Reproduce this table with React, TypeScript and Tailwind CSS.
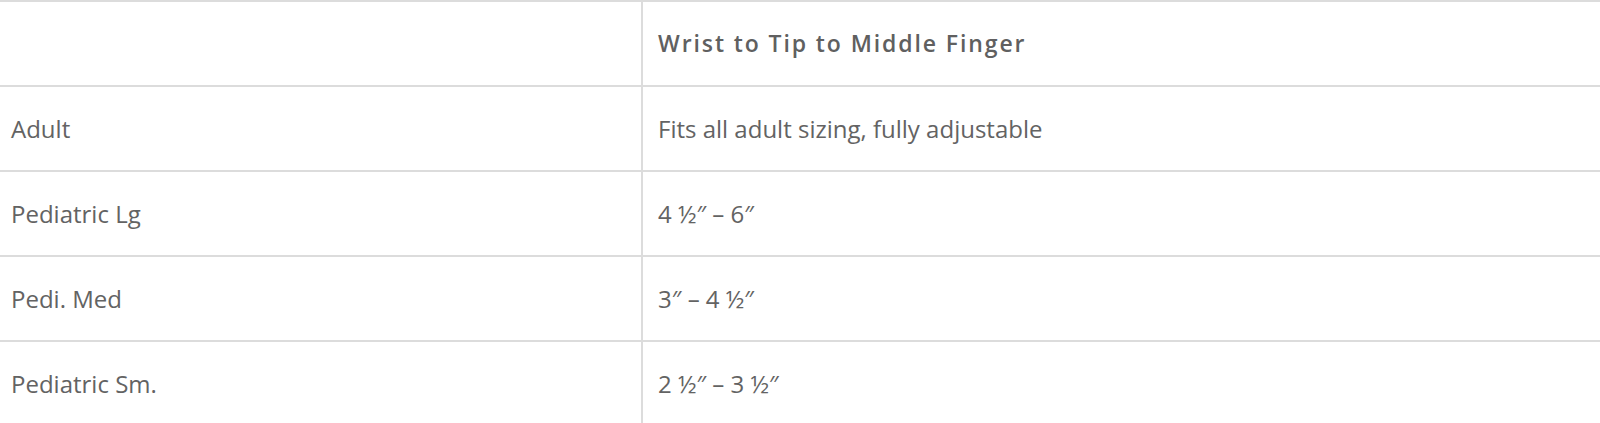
import React from "react";

const rows = [
    { size: "Adult", range: "Fits all adult sizing, fully adjustable" },
    { size: "Pediatric Lg", range: "4 ½″ – 6″" },
    { size: "Pedi. Med", range: "3″ – 4 ½″" },
    { size: "Pediatric Sm.", range: "2 ½″ – 3 ½″" },
];

export default function App() {
    return (
        <div className="w-[1600px] h-[423px] bg-white overflow-hidden font-['Open_Sans',sans-serif] text-[#636363]">
            <table className="w-full border-collapse table-fixed border-t-2 border-[#dcdcdc]">
                <colgroup>
                    <col className="w-[642px]" />
                    <col />
                </colgroup>
                <thead>
                    <tr className="h-[85px] border-b-2 border-[#dcdcdc]">
                        <th className="border-r-2 border-[#dcdcdc]"></th>
                        <th className="text-left font-semibold pl-[15px] text-[23px] tracking-[1.9px] text-[#606060]">
                            Wrist to Tip to Middle Finger
                        </th>
                    </tr>
                </thead>
                <tbody>
                    {rows.map((row) => (
                        <tr
                            key={row.size}
                            className="h-[85px] border-b-2 border-[#dcdcdc] text-[24px]"
                        >
                            <td className="pl-[11px] border-r-2 border-[#dcdcdc]">
                                {row.size}
                            </td>
                            <td className="pl-[15px]">{row.range}</td>
                        </tr>
                    ))}
                </tbody>
            </table>
        </div>
    );
}
